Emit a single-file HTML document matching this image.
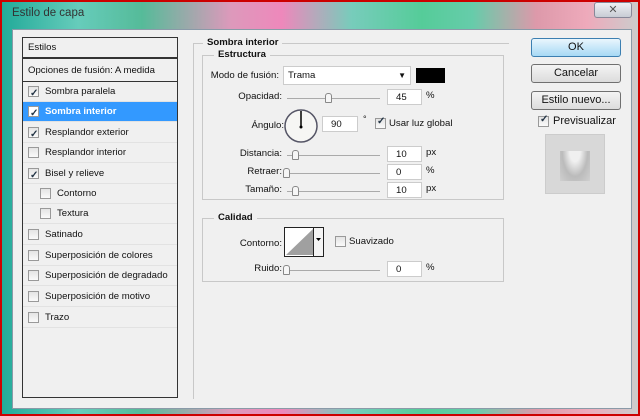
<!DOCTYPE html>
<html><head><meta charset="utf-8"><style>
*{margin:0;padding:0;box-sizing:border-box}
body{width:640px;height:416px;overflow:hidden;position:relative;background:#c00;font-family:"Liberation Sans",sans-serif;font-size:9.6px;color:#111}
.a{position:absolute}
#frame{left:2px;top:2px;width:636px;height:412px;background:linear-gradient(90deg,#2a9 0%,#6cb 12%,#5b9 22%,#d9b 36%,#e8b 44%,#7cb 55%,#5c9 66%,#6ca 74%,#d9a 84%,#eab 92%,#ccc 100%)}
#client{left:12px;top:29px;width:620px;height:380px;background:#f0f0f0;border:1px solid #8a9aa8}
.row{position:absolute;left:23px;width:154px;height:20px;border-bottom:1px solid #e2e2e2;line-height:20px;padding-left:22px;white-space:nowrap}
.cb{position:absolute;width:11px;height:11px;border:1px solid #999;background:linear-gradient(#e4e4e4,#fafafa)}
.cb.c::after{content:"✓";position:absolute;left:1px;top:-3px;font-size:10px;color:#234;font-weight:bold}
.row .cb{left:5px;top:4px}
.lbl{position:absolute;text-align:right;white-space:nowrap}
.inp{position:absolute;background:#fff;border:1px solid #ccc;height:16px;line-height:15px;padding-left:8px}
.sl{position:absolute;height:1px;background:#aaa}
.th{position:absolute;width:7px;height:10px;border:1px solid #888;border-radius:3px 3px 1px 1px;background:#f6f6f6}
.btn{position:absolute;left:531px;width:90px;height:19px;border:1px solid #707070;border-radius:3px;background:linear-gradient(#f4f4f4,#dcdcdc);text-align:center;line-height:17px;font-size:11px}
.box{position:absolute;border:1px solid #c8c8c8}
.leg{position:absolute;background:#f0f0f0;font-weight:bold;padding:0 4px;font-size:9.6px}
</style></head><body>
<div class="a" id="frame"></div>
<div class="a" style="left:12px;top:7px;font-size:11.5px;color:#333">Estilo de capa</div>
<div class="a" style="left:594px;top:2px;width:38px;height:16px;border:1px solid #889;border-radius:3px;background:linear-gradient(#eef0f4,#c8ccd4);text-align:center;font-size:11px;color:#555;line-height:14px">✕</div>
<div class="a" id="client"></div>

<div class="a" style="left:22px;top:37px;width:156px;height:361px;border:1px solid #333;background:#f0f0f0"></div>
<div class="a" style="left:23px;top:38px;width:154px;height:21px;border-bottom:2px solid #333;line-height:20px;padding-left:5px">Estilos</div>
<div class="a" style="left:23px;top:60px;width:154px;height:22px;border-bottom:1px solid #333;line-height:22px;padding-left:5px">Opciones de fusión: A medida</div>
<div class="row" style="top:82px"><span class="cb c"></span>Sombra paralela</div>
<div class="row" style="top:102px;background:#3399ff;color:#fff;font-weight:bold"><span class="cb c" style="background:#fff"></span>Sombra interior</div>
<div class="row" style="top:123px"><span class="cb c"></span>Resplandor exterior</div>
<div class="row" style="top:143px"><span class="cb"></span>Resplandor interior</div>
<div class="row" style="top:164px"><span class="cb c"></span>Bisel y relieve</div>
<div class="row" style="top:184px;padding-left:34px"><span class="cb" style="left:17px"></span>Contorno</div>
<div class="row" style="top:204px;padding-left:34px"><span class="cb" style="left:17px"></span>Textura</div>
<div class="row" style="top:225px"><span class="cb"></span>Satinado</div>
<div class="row" style="top:246px"><span class="cb"></span>Superposición de colores</div>
<div class="row" style="top:266px"><span class="cb"></span>Superposición de degradado</div>
<div class="row" style="top:287px"><span class="cb"></span>Superposición de motivo</div>
<div class="row" style="top:308px"><span class="cb"></span>Trazo</div>

<div class="box" style="left:193px;top:43px;width:316px;height:356px;border-right:none;border-bottom:none"></div>
<div class="leg" style="left:203px;top:37px">Sombra interior</div>
<div class="box" style="left:202px;top:55px;width:302px;height:145px"></div>
<div class="leg" style="left:214px;top:49px">Estructura</div>
<div class="lbl" style="right:361px;top:70px">Modo de fusión:</div>
<div class="inp" style="left:283px;top:66px;width:128px;height:19px;line-height:18px;padding-left:4px">Trama<span style="position:absolute;right:4px;top:0;font-size:8px">▼</span></div>
<div class="a" style="left:416px;top:68px;width:29px;height:15px;background:#000"></div>
<div class="lbl" style="right:358px;top:91px">Opacidad:</div>
<div class="sl" style="left:287px;top:98px;width:93px"></div><div class="th" style="left:325px;top:93px"></div>
<div class="inp" style="left:387px;top:89px;width:35px">45</div><div class="a" style="left:426px;top:90px">%</div>
<div class="lbl" style="right:356px;top:120px">Ángulo:</div>
<svg class="a" style="left:283px;top:108px" width="36" height="36"><circle cx="18" cy="18" r="16" fill="#f6f6f4" stroke="#556" stroke-width="1.5"/><line x1="18" y1="3" x2="18" y2="19" stroke="#000" stroke-width="1.5"/><circle cx="18" cy="19" r="1.5"/></svg>
<div class="inp" style="left:322px;top:116px;width:36px">90</div>
<div class="a" style="left:363px;top:114px;font-size:9px">°</div>
<span class="cb c a" style="left:375px;top:118px"></span>
<div class="a" style="left:389px;top:118px">Usar luz global</div>
<div class="lbl" style="right:358px;top:148px">Distancia:</div>
<div class="sl" style="left:287px;top:155px;width:93px"></div><div class="th" style="left:292px;top:150px"></div>
<div class="inp" style="left:387px;top:146px;width:35px">10</div><div class="a" style="left:426px;top:147px">px</div>
<div class="lbl" style="right:358px;top:166px">Retraer:</div>
<div class="sl" style="left:284px;top:173px;width:96px"></div><div class="th" style="left:283px;top:168px"></div>
<div class="inp" style="left:387px;top:164px;width:35px">0</div><div class="a" style="left:426px;top:165px">%</div>
<div class="lbl" style="right:358px;top:184px">Tamaño:</div>
<div class="sl" style="left:287px;top:191px;width:93px"></div><div class="th" style="left:292px;top:186px"></div>
<div class="inp" style="left:387px;top:182px;width:35px">10</div><div class="a" style="left:426px;top:183px">px</div>

<div class="box" style="left:202px;top:218px;width:302px;height:64px"></div>
<div class="leg" style="left:214px;top:212px">Calidad</div>
<div class="lbl" style="right:358px;top:238px">Contorno:</div>
<svg class="a" style="left:284px;top:227px" width="40" height="30"><rect x="0.5" y="0.5" width="39" height="29" fill="#fff" stroke="#222"/><polygon points="2,28 29,2 29,28" fill="#a0a0a0"/><line x1="29.5" y1="0" x2="29.5" y2="30" stroke="#222"/><rect x="30" y="1" width="9" height="28" fill="#f4f4f4"/><polygon points="32,11 37,11 34.5,14" fill="#000"/></svg>
<span class="cb a" style="left:335px;top:236px"></span>
<div class="a" style="left:349px;top:236px">Suavizado</div>
<div class="lbl" style="right:358px;top:263px">Ruido:</div>
<div class="sl" style="left:284px;top:270px;width:96px"></div><div class="th" style="left:283px;top:265px"></div>
<div class="inp" style="left:387px;top:261px;width:35px">0</div><div class="a" style="left:426px;top:262px">%</div>

<div class="btn" style="top:38px;border-color:#3c7fb1;background:linear-gradient(#eaf6fd,#a7d9f5)">OK</div>
<div class="btn" style="top:64px">Cancelar</div>
<div class="btn" style="top:91px">Estilo nuevo...</div>
<span class="cb c a" style="left:538px;top:116px"></span>
<div class="a" style="left:553px;top:115px;font-size:11px">Previsualizar</div>
<div class="a" style="left:545px;top:134px;width:60px;height:60px;background:#d8d8d8;border:1px solid #ccc"></div>
<div class="a" style="left:560px;top:151px;width:30px;height:30px;background:radial-gradient(ellipse at 50% 0%,#f0f0f0 25%,#bbb 60%,#d0d0d0 100%)"></div>
</body></html>
